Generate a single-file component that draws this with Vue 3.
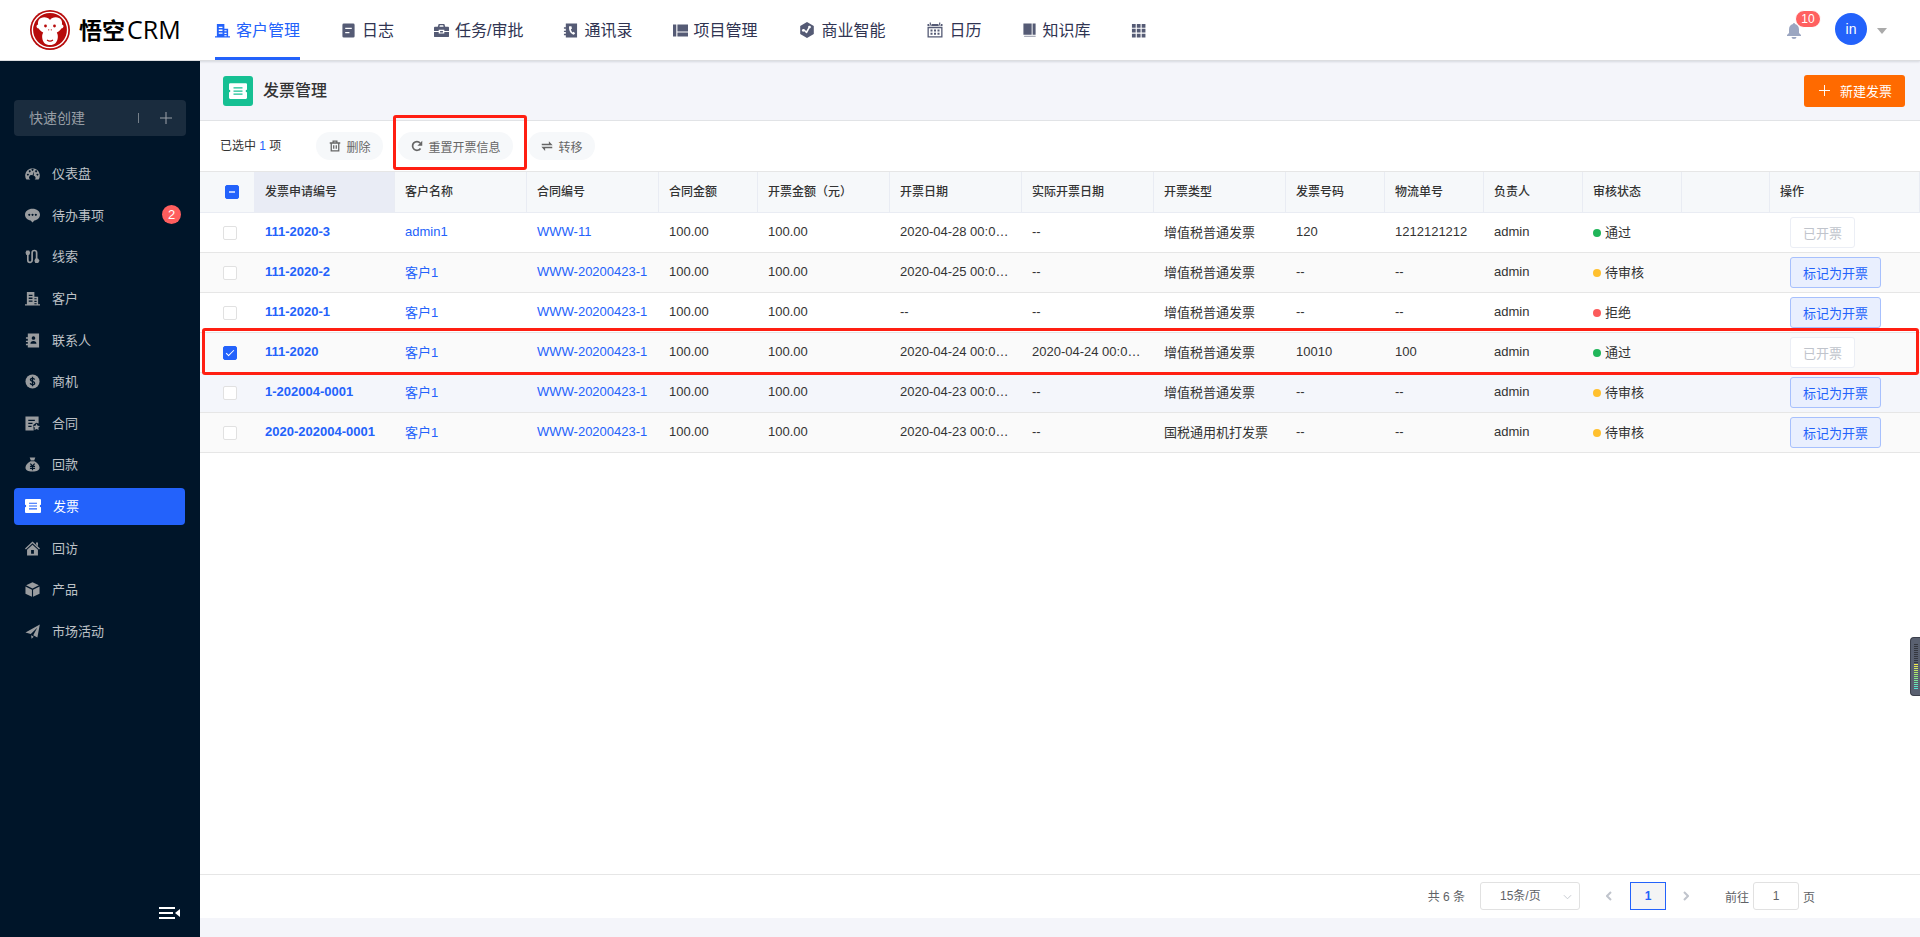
<script setup>
import { ref } from 'vue'

const icons = {
  customer: '<path fill-rule="evenodd" d="M2 1h8v5h4v8h2v1.400H0V14h2zM4 4v1.400h4V4zm0 3v1.400h4V7zm0 3v1.400h4V10zM10 7.600v1.200h2.400V7.600zm0 2.800v1.200h2.400v-1.200zm0 2.600v1h2.400v-1z"/>',
  log: '<path fill-rule="evenodd" d="M3 .5h10A1.500 1.500 0 0 1 14.500 2v12a1.500 1.500 0 0 1-1.500 1.500H3A1.500 1.500 0 0 1 1.500 14V2A1.500 1.500 0 0 1 3 .5zM4.500 5v1.500h7V5zm0 4.500V11H9V9.500z"/>',
  task: '<path fill-rule="evenodd" d="M5 1h6l1 3h3a1 1 0 0 1 1 1v3.500h-5V7.300H5v1.200H0V5a1 1 0 0 1 1-1h3zm1.200 1.400L5.800 4h4.400l-.4-1.600zM0 9.700h5v1.500h6V9.700h5V14a1 1 0 0 1-1 1H1a1 1 0 0 1-1-1zM6.500 8.600h3v1.400h-3z"/>',
  contacts: '<path fill-rule="evenodd" d="M3 .5h12v15H3V13H1v-1.500h2V9.700H1V8.200h2V6H1V4.500h2zm3.500 3C6 8 8 11.500 11.500 12.500l1.500-1.700-1.800-1.500-1.200.7C9 9 8.600 8 8.500 6.500L9.600 6 9 3.500z"/>',
  project: '<path d="M0 1.500h3.500v13H0zM4.700 1.500H16V9H4.700zM4.700 10.200H16v4.300H4.700z"/>',
  bi: '<path fill-rule="evenodd" d="M8 0l6.800 3.900v8.200L8 16l-6.800-3.900V3.900zM4.500 7a1.400 1.400 0 1 0 .8 2.300l1.900 2 .9-.2 2.400-4.600a1.400 1.400 0 1 0-1.300-.8L7.300 9 6 7.900A1.400 1.400 0 0 0 4.500 7z"/>',
  calendar: '<path fill-rule="evenodd" d="M.5 5h15v10.500H.5zm1.300 1.300v7.900h12.400V6.300zM.5 2h1.500v1.500h2.500V2h7v1.500H14V2h1.500v2.300H.5zM2.700.5h1.200V3H2.700zM12.100.5h1.200V3h-1.200zM3.500 7.500h2v2h-2zm3.500 0h2v2H7zm3.500 0h2v2h-2zm-7 3.300h2v2h-2zm3.500 0h2v2H7zm3.500 0h2v2h-2z"/>',
  book: '<path d="M1.500.5h8.800v12H1.500zM11.300.5h3.200v12h-3.200z"/><path opacity=".5" d="M2.500 13.500h12V15h-12a1 1 0 0 1 0-1.500z"/>',
  grid: '<path d="M1 1h4v4H1zM6.200 1h4v4h-4zM11.400 1h4v4h-4zM1 6.200h4v4H1zM6.200 6.200h4v4h-4zM11.400 6.200h4v4h-4zM1 11.400h4v4H1zM6.200 11.400h4v4h-4zM11.400 11.400h4v4h-4z"/>',
  bell: '<path d="M8 0a1 1 0 0 1 1 1c2.700.6 4 2.700 4 5.500V10l2 2v1H1v-1l2-2V6.500C3 3.700 4.300 1.600 7 1a1 1 0 0 1 1-1zM5.500 14h5a2.500 2 0 0 1-5 0z"/>',
  gauge: '<path fill-rule="evenodd" d="M1.500 14.500A7.800 7.800 0 1 1 14.500 14.500H10.200A2.300 2.300 0 0 0 9.200 10.300L9.800 5.500 8 9.900A2.300 2.300 0 0 0 5.800 14.500zM3 8.200a1 1 0 1 0 .1 0zM5 4.600a1 1 0 1 0 .1 0zM8 3a1 1 0 1 0 .1 0zM11.800 4.600a1 1 0 1 0 .1 0zM13.200 8.200a1 1 0 1 0 .1 0z"/>',
  chat: '<path fill-rule="evenodd" d="M8 .8c4.500 0 8 2.700 8 6.300 0 3.200-2.600 5.600-6 6.100L8 15.500l-2-2.300C2.600 12.700 0 10.300 0 7.100 0 3.500 3.500.8 8 .8zM4.500 6.200a1.100 1.100 0 1 0 .1 0zM8 6.200a1.100 1.100 0 1 0 .1 0zM11.500 6.200a1.100 1.100 0 1 0 .1 0z"/>',
  clue: '<path fill="none" stroke="currentColor" stroke-width="1.800" d="M3 5v7a2.300 2.300 0 0 0 4.600 0V4a2.300 2.300 0 0 1 4.800 0v7"/><path d="M1.500 1.500h3L5.500 4l-1 2.500h-3L.5 4zM11 10h3l1.500 2.500L14 15h-3l-1-2.500z"/>',
  person: '<path fill-rule="evenodd" d="M3 .5h12v15H3V13H1v-1.500h2V9.700H1V8.200h2V6H1V4.500h2zm6 3a1.900 1.900 0 1 0 .1 0zM5.800 11.500h6.400c0-2-1.200-3-3.200-3s-3.200 1-3.200 3z"/>',
  dollar: '<circle cx="8" cy="8" r="7.500"/><path fill="none" stroke="#001529" stroke-width="1.400" d="M10.300 6C10 4.900 9 4.600 8 4.600c-1.300 0-2.200.6-2.200 1.600 0 2.300 4.500 1.200 4.500 3.600 0 1-1 1.600-2.300 1.600-1.200 0-2.200-.5-2.400-1.600M8 3v10"/>',
  contract: '<path fill-rule="evenodd" d="M.5.5h14v7.500l-2.500-.7-3.200 2.200.5 6H.5zM3.500 4v1.300h7V4zm0 3.200v1.300H8V7.200zm0 3.300v1.300H7v-1.300z"/><path d="M12.300 8l1.200 2.300 2.500.4-1.800 1.800.4 2.500-2.300-1.100-2.200 1.100.4-2.500-1.800-1.800 2.500-.4z"/>',
  money: '<path d="M5 .5h6L9.800 3.800H6.200zM5.800 4.500h4.400C13 6 15.500 8.500 15.500 11.200c0 2.700-2.500 4.300-7.500 4.300S.5 13.900.5 11.200C.5 8.500 3 6 5.800 4.500z"/><path fill="none" stroke="#001529" stroke-width="1.300" d="M5.700 7L8 9.500 10.300 7M8 9.500V14M5.300 10h5.400M5.300 12.200h5.400"/>',
  invoice: '<path fill-rule="evenodd" d="M1 1h14a1 1 0 0 1 1 1v4.800a1.200 1.200 0 0 0 0 2.400V14a1 1 0 0 1-1 1H1a1 1 0 0 1-1-1V9.200a1.200 1.200 0 0 0 0-2.400V2a1 1 0 0 1 1-1zM4 4.700v1.100h8V4.700zm0 2.800v1.100h8V7.500zm0 2.800v1.100h8v-1.100z"/>',
  house: '<path d="M8 .5L16 8l-1 1-7-6.500L1 9 0 8zM11.800 1.500h2v4l-2-2z"/><path fill-rule="evenodd" d="M8 4l5.800 5.300V15.500H2.200V9.300zM6.500 9.500v4h3v-4z"/>',
  cube: '<path d="M8 .2l6.800 3.300L8 6.900 1.200 3.500zM.5 4.800l6.900 3.400v7.600L.5 12.400zM15.500 4.800L8.600 8.200v7.600l6.900-3.400z"/>',
  plane: '<path d="M15.800.5L13.200 14.500l-4.400-2.600L13 4 6.200 10.700.5 9zM6.500 12l2.800 1.700-2.300 2.100z"/>',
  trash: '<path fill="none" stroke="currentColor" stroke-width="1.700" d="M1 4h14M5.500 4V1.500h5V4M3 4v10.500h10V4M6.300 7v4.500M9.700 7v4.500"/>',
  refresh: '<path fill="none" stroke="currentColor" stroke-width="2.300" d="M12.700 11.200A5.800 5.800 0 1 1 12.200 4"/><path d="M15 1v6.500H8.500z"/>',
  transfer: '<path d="M1 5h9.500V1.500L15.500 6.900H1zM15 9.100H.5l5 5.400V11H15z"/>',
  plus: '<path fill="none" stroke="currentColor" stroke-width="1.400" d="M8 0v16M0 8h16"/>'
}

const nav = [
  { label: '客户管理', icon: 'customer', active: true },
  { label: '日志', icon: 'log' },
  { label: '任务/审批', icon: 'task' },
  { label: '通讯录', icon: 'contacts' },
  { label: '项目管理', icon: 'project' },
  { label: '商业智能', icon: 'bi' },
  { label: '日历', icon: 'calendar' },
  { label: '知识库', icon: 'book' }
]

const menu = [
  { label: '仪表盘', icon: 'gauge' },
  { label: '待办事项', icon: 'chat', badge: 2 },
  { label: '线索', icon: 'clue' },
  { label: '客户', icon: 'customer' },
  { label: '联系人', icon: 'person' },
  { label: '商机', icon: 'dollar' },
  { label: '合同', icon: 'contract' },
  { label: '回款', icon: 'money' },
  { label: '发票', icon: 'invoice', active: true },
  { label: '回访', icon: 'house' },
  { label: '产品', icon: 'cube' },
  { label: '市场活动', icon: 'plane' }
]

const columns = [
  { label: '发票申请编号', cls: 'c-no' },
  { label: '客户名称', cls: 'c-wide' },
  { label: '合同编号', cls: 'c-wide' },
  { label: '合同金额', cls: 'c-mid' },
  { label: '开票金额（元）', cls: 'c-wide' },
  { label: '开票日期', cls: 'c-wide' },
  { label: '实际开票日期', cls: 'c-wide' },
  { label: '开票类型', cls: 'c-wide' },
  { label: '发票号码', cls: 'c-mid' },
  { label: '物流单号', cls: 'c-mid' },
  { label: '负责人', cls: 'c-mid' },
  { label: '审核状态', cls: 'c-mid' }
]

const states = {
  pass: { label: '通过', cls: 'green' },
  wait: { label: '待审核', cls: 'yellow' },
  deny: { label: '拒绝', cls: 'red' }
}

const vat = '增值税普通发票'
const rows = ref([
  { no: '111-2020-3', customer: 'admin1', contract: 'WWW-11', date: '2020-04-28 00:00:00', real: '--', type: vat, code: '120', ship: '1212121212', state: 'pass', done: true, checked: false },
  { no: '111-2020-2', customer: '客户1', contract: 'WWW-20200423-1', date: '2020-04-25 00:00:00', real: '--', type: vat, code: '--', ship: '--', state: 'wait', done: false, checked: false },
  { no: '111-2020-1', customer: '客户1', contract: 'WWW-20200423-1', date: '--', real: '--', type: vat, code: '--', ship: '--', state: 'deny', done: false, checked: false },
  { no: '111-2020', customer: '客户1', contract: 'WWW-20200423-1', date: '2020-04-24 00:00:00', real: '2020-04-24 00:00:00', type: vat, code: '10010', ship: '100', state: 'pass', done: true, checked: true, marked: true },
  { no: '1-202004-0001', customer: '客户1', contract: 'WWW-20200423-1', date: '2020-04-23 00:00:00', real: '--', type: vat, code: '--', ship: '--', state: 'wait', done: false, checked: false, hover: true },
  { no: '2020-202004-0001', customer: '客户1', contract: 'WWW-20200423-1', date: '2020-04-23 00:00:00', real: '--', type: '国税通用机打发票', code: '--', ship: '--', state: 'wait', done: false, checked: false }
])
const page = ref('1')
</script>

<template>
  <div class="app">
    <header class="top">
      <a class="brand" href="#" aria-label="悟空CRM">
        <svg class="logo" viewBox="0 0 40 40" aria-hidden="true">
          <circle cx="20" cy="20" r="20" fill="#b70b0b" />
          <circle cx="20" cy="20" r="17.600" fill="none" stroke="#fff" stroke-width="1.400" />
          <path fill="#fff" d="M20 10c2-3.500 9-4 11.300 0 .8 1.500.9 3 .6 4.500 2 .2 2.400 3.500-.6 4-1 1.800-2.500 3-4.500 4 .8 1.500 1.200 3 1 5C27.400 32.500 24.500 35 20 35s-7.400-2.500-7.800-7.500c-.2-2 .2-3.500 1-5-2-1-3.500-2.200-4.500-4-3-.5-2.600-3.800-.6-4-.3-1.500-.2-3 .6-4.500C11 6 18 6.500 20 10z" />
          <path fill="none" stroke="#b70b0b" stroke-width="1.100" d="M17 30q3 2.200 6 0" />
          <g fill="#b70b0b"><circle cx="15.500" cy="16" r="1.400" /><circle cx="24.500" cy="16" r="1.400" /><circle cx="18.700" cy="19.800" r=".6" /><circle cx="21.300" cy="19.800" r=".6" /></g>
        </svg>
        <span class="brand-cn">悟空</span><span class="brand-en">CRM</span>
      </a>
      <nav class="nav">
        <a v-for="n in nav" :key="n.label" href="#" class="nav-item" :class="[n.icon, { active: n.active }]">
          <svg class="nav-icon" viewBox="0 0 16 16" aria-hidden="true" v-html="icons[n.icon]"></svg>
          <span>{{ n.label }}</span>
        </a>
        <a href="#" class="nav-item" aria-label="更多"><svg class="nav-icon" viewBox="0 0 16 16" v-html="icons.grid"></svg></a>
      </nav>
      <div class="user">
        <button class="bell" aria-label="通知">
          <svg viewBox="0 0 16 16" v-html="icons.bell"></svg>
          <span class="bell-badge">10</span>
        </button>
        <button class="account"><span class="avatar">in</span><i class="caret"></i></button>
      </div>
    </header>

    <div class="body">
      <aside class="side">
        <button class="quick"><span>快速创建</span><i class="bar"></i><svg viewBox="0 0 16 16" v-html="icons.plus"></svg></button>
        <nav class="menu">
          <a v-for="m in menu" :key="m.label" href="#" class="menu-item" :class="{ active: m.active }">
            <svg viewBox="0 0 16 16" aria-hidden="true" v-html="icons[m.icon]"></svg>
            <span>{{ m.label }}</span>
            <em v-if="m.badge">{{ m.badge }}</em>
          </a>
        </nav>
        <button class="fold" aria-label="收起菜单">
          <svg viewBox="0 0 22 12"><path fill="#fff" d="M0 0h16v2H0zM0 5h14v2H0zM0 10h16v2H0zM21 2v8l-5-4z" /></svg>
        </button>
      </aside>

      <main class="main">
        <div class="title-bar">
          <span class="title-icon"><svg viewBox="0 0 16 16" v-html="icons.invoice"></svg></span>
          <h1>发票管理</h1>
          <button class="create"><svg viewBox="0 0 16 16" v-html="icons.plus"></svg>新建发票</button>
        </div>

        <section class="panel">
          <div class="tools">
            <span class="picked">已选中 <b>1</b> 项</span>
            <button class="pill"><svg viewBox="0 0 16 16" v-html="icons.trash"></svg>删除</button>
            <div class="pill-wrap">
              <button class="pill"><svg viewBox="0 0 16 16" v-html="icons.refresh"></svg>重置开票信息</button>
              <i class="frame tool-frame"></i>
            </div>
            <button class="pill"><svg viewBox="0 0 16 16" v-html="icons.transfer"></svg>转移</button>
          </div>

          <table class="grid">
            <colgroup>
              <col class="c-check" />
              <col v-for="c in columns" :key="c.label" :class="c.cls" />
              <col />
              <col class="c-act" />
            </colgroup>
            <thead>
              <tr>
                <th class="check"><input type="checkbox" aria-label="全选" :indeterminate="true" /></th>
                <th v-for="(c, i) in columns" :key="c.label" :class="{ sorted: i === 0 }">{{ c.label }}</th>
                <th></th>
                <th>操作</th>
              </tr>
            </thead>
            <tbody>
              <tr v-for="r in rows" :key="r.no" :class="{ hover: r.hover, marked: r.marked }">
                <td class="check">
                  <input v-model="r.checked" type="checkbox" :aria-label="r.no" />
                  <i v-if="r.marked" class="frame row-frame"></i>
                </td>
                <td><a href="#" class="strong">{{ r.no }}</a></td>
                <td><a href="#">{{ r.customer }}</a></td>
                <td><a href="#">{{ r.contract }}</a></td>
                <td>100.00</td>
                <td>100.00</td>
                <td>{{ r.date }}</td>
                <td>{{ r.real }}</td>
                <td>{{ r.type }}</td>
                <td>{{ r.code }}</td>
                <td>{{ r.ship }}</td>
                <td>admin</td>
                <td><i class="dot" :class="states[r.state].cls"></i>{{ states[r.state].label }}</td>
                <td></td>
                <td class="act"><button :disabled="r.done">{{ r.done ? '已开票' : '标记为开票' }}</button></td>
              </tr>
            </tbody>
          </table>

          <footer class="pager">
            <span class="total">共 6 条</span>
            <span class="size">
              <select aria-label="每页条数"><option>15条/页</option></select>
              <svg viewBox="0 0 10 6"><path d="M1 1l4 4 4-4" /></svg>
            </span>
            <button class="arrow" aria-label="上一页"><svg viewBox="0 0 6 10"><path d="M5 1L1 5l4 4" /></svg></button>
            <button class="current">1</button>
            <button class="arrow" aria-label="下一页"><svg viewBox="0 0 6 10"><path d="M1 1l4 4-4 4" /></svg></button>
            <label class="jump">前往<input v-model="page" type="text" />页</label>
          </footer>
        </section>
      </main>
    </div>

    <div class="meter" aria-hidden="true"><i class="off"></i><i class="on"></i></div>
  </div>
</template>

<style>
body {
  margin: 0;
}
</style>

<style scoped>
.app {
  display: flex;
  flex-direction: column;
  min-height: 100vh;
  font-family: "Liberation Sans", "Noto Sans CJK SC", sans-serif;
  font-size: 13px;
  color: #333;
  background: #f4f5fa;
}
.app * {
  box-sizing: border-box;
}
a {
  color: #2362fb;
  text-decoration: none;
}
button {
  margin: 0;
  padding: 0;
  border: 0;
  background: none;
  font: inherit;
  color: inherit;
  cursor: pointer;
}
svg {
  display: block;
  flex: none;
  fill: currentColor;
}

/* top bar */
.top {
  position: relative;
  z-index: 2;
  display: flex;
  align-items: stretch;
  height: 61px;
  background: #fff;
  border-bottom: 1px solid #dcdde0;
  box-shadow: 0 1px 2px rgba(0, 21, 41, 0.12);
}
.brand {
  display: flex;
  align-items: center;
  width: 215px;
  padding-left: 30px;
  color: #000;
}
.logo {
  width: 40px;
  height: 40px;
  margin-right: 9px;
}
.brand-cn {
  padding-bottom: 3px;
  font-size: 23px;
  font-weight: 700;
}
.brand-en {
  margin-left: 2px;
  padding-bottom: 2px;
  font-family: "Open Sans", sans-serif;
  font-size: 25px;
  font-weight: 500;
}
.nav {
  display: flex;
  gap: 40px;
}
.nav-item {
  display: flex;
  align-items: center;
  gap: 6px;
  font-size: 16px;
  color: #303452;
  border-bottom: 3px solid transparent;
  border-top: 3px solid transparent;
}
.nav-item.active {
  color: #2362fb;
  border-bottom-color: #2362fb;
}
.nav-item span {
  padding-bottom: 2px;
}
.nav-icon {
  width: 15px;
  height: 15px;
  color: #555b75;
}
.active .nav-icon {
  color: #2362fb;
}
.log {
  margin-left: 1px;
}
.bi .nav-icon,
.calendar .nav-icon {
  width: 18px;
  height: 16px;
}
.user {
  display: flex;
  align-items: center;
  margin: 0 33px 0 auto;
  padding-bottom: 2px;
}
.bell {
  position: relative;
  width: 16px;
  margin: 4px 33px 0 0;
  color: #9ba6c1;
}
.bell svg {
  width: 16px;
  height: 18px;
}
.bell-badge {
  position: absolute;
  left: 9px;
  top: -12px;
  width: 26px;
  border: 1px solid #fff;
  border-radius: 9px;
  background: #ff6060;
  color: #fff;
  font-size: 12px;
  line-height: 16px;
}
.account {
  display: flex;
  align-items: center;
  gap: 10px;
}
.avatar {
  width: 32px;
  border-radius: 50%;
  background: #2362fb;
  color: #fff;
  font-size: 14px;
  line-height: 32px;
}
.caret {
  margin-top: 3px;
  border: 5px solid transparent;
  border-top: 6px solid #aaa;
  border-bottom: 0;
}

/* side menu */
.body {
  display: flex;
  flex: 1;
}
.side {
  display: flex;
  flex-direction: column;
  width: 200px;
  flex: none;
  padding: 39px 14px 18px;
  background: #001529;
  color: #bdc1c6;
}
.quick {
  display: flex;
  align-items: center;
  height: 36px;
  padding: 0 14px 0 15px;
  border-radius: 4px;
  background: #1a2c3e;
  color: #999fa6;
  font-size: 14px;
}
.quick span {
  padding-bottom: 2px;
}
.quick .bar {
  width: 1px;
  height: 10px;
  margin: 0 21px 0 auto;
  background: #76808a;
}
.quick svg {
  width: 12px;
  height: 12px;
}
.menu {
  display: grid;
  grid-auto-rows: 1fr;
  align-items: center;
  height: 499px;
  margin-top: 17px;
}
.menu-item {
  display: flex;
  align-items: center;
  height: 37px;
  padding: 0 5px 0 11px;
  border-radius: 4px;
  color: inherit;
}
.menu-item span {
  padding-bottom: 2px;
}
.menu-item svg {
  width: 15px;
  height: 15px;
  margin-right: 12px;
  color: #999c9f;
}
.menu-item.active {
  margin-right: 1px;
  background: #2362fb;
  color: #fff;
}
.menu-item.active svg {
  width: 16px;
  height: 16px;
  color: #fff;
}
.menu-item em {
  width: 19px;
  margin: 0 0 2px auto;
  border-radius: 50%;
  background: #ff5e5e;
  color: #fff;
  font-style: normal;
  line-height: 19px;
  text-align: center;
}
.fold {
  margin: auto 5px 0 auto;
}
.fold svg {
  width: 22px;
  height: 12px;
}

/* content */
.main {
  display: flex;
  flex: 1;
  flex-direction: column;
  min-width: 0;
  padding-bottom: 19px;
}
.title-bar {
  display: flex;
  align-items: center;
  height: 59px;
  padding: 0 15px 0 23px;
}
.title-icon {
  padding: 6px;
  border-radius: 3px;
  background: #16c093;
  color: #fff;
}
.title-icon svg {
  width: 18px;
  height: 18px;
}
h1 {
  margin: 0 auto 0 10px;
  padding-bottom: 4px;
  font-size: 16px;
  font-weight: 500;
}
.create {
  display: flex;
  align-items: center;
  gap: 10px;
  height: 32px;
  padding: 0 13px 0 15px;
  border-radius: 3px;
  background: #ff6a00;
  color: #fff;
}
.create svg {
  width: 11px;
  height: 11px;
}
.panel {
  display: flex;
  flex: 1;
  flex-direction: column;
  border-top: 1px solid #e1e3e6;
  background: #fff;
}
.tools {
  display: flex;
  align-items: center;
  gap: 15px;
  height: 51px;
  padding-left: 20px;
  border-bottom: 1px solid #e6e6e6;
  font-size: 12px;
}
.picked {
  margin-right: 20px;
  padding-bottom: 3px;
}
.picked b {
  font-weight: 400;
  color: #2362fb;
}
.pill-wrap {
  position: relative;
}
.pill {
  display: flex;
  align-items: center;
  gap: 5px;
  height: 28px;
  padding: 0 13px;
  border-radius: 14px;
  background: #f6f8fa;
  color: #666;
}
.pill svg {
  width: 12px;
  height: 12px;
}
.frame {
  position: absolute;
  border: 3px solid #ff1f12;
  border-radius: 3px;
  pointer-events: none;
}
.tool-frame {
  inset: -17px -14px -10px -5px;
}
.row-frame {
  inset: -5px 1px -2px 2px;
}

/* table */
.grid {
  width: 100%;
  table-layout: fixed;
  border-collapse: separate;
  border-spacing: 0;
}
.c-check {
  width: 54px;
}
.c-no {
  width: 141px;
}
.c-wide {
  width: 132px;
}
.c-mid {
  width: 99px;
}
.c-act {
  width: 150px;
}
th,
td {
  height: 40px;
  padding: 0 10px 2px;
  overflow: hidden;
  text-align: left;
  text-overflow: ellipsis;
  white-space: nowrap;
  border-bottom: 1px solid #e6e6e6;
}
th {
  height: 41px;
  padding-bottom: 4px;
  border-right: 1px solid #e9ecf3;
  border-bottom-color: #e9ecf3;
  background: #f6f8fa;
  font-size: 12px;
  font-weight: 500;
}
th.check {
  padding: 0 0 0 25px;
  border-right: 0;
}
th.sorted {
  background: #e9ecf5;
}
th:nth-child(2),
td:nth-child(2) {
  padding-left: 11px;
}
td.check {
  padding: 0 0 0 23px;
  overflow: visible;
}
tbody tr {
  position: relative;
}
tbody tr:nth-child(even) {
  background: #fafafa;
}
tbody tr.hover {
  background: #f4f6fb;
}
tbody tr.marked {
  z-index: 1;
}
.strong {
  font-weight: 700;
}
.grid input {
  appearance: none;
  display: block;
  width: 14px;
  height: 14px;
  margin: 0;
  border: 1px solid #e1e1e1;
  border-radius: 2px;
  background: #fff;
}
.grid input:checked,
.grid input:indeterminate {
  border-color: #2362fb;
  background: #2362fb;
}
.grid input:checked::after {
  content: "";
  display: block;
  width: 3px;
  height: 7px;
  margin: 1px 0 0 4px;
  border: solid #fff;
  border-width: 0 1px 1px 0;
  transform: rotate(45deg);
}
.grid input:indeterminate::after {
  content: "";
  display: block;
  width: 6px;
  height: 2px;
  margin: 5px 3px;
  background: #b5caff;
}
.dot {
  display: inline-block;
  width: 8px;
  height: 8px;
  margin-right: 4px;
  border-radius: 50%;
}
.green {
  background: #20b559;
}
.yellow {
  background: #ffc02e;
}
.red {
  background: #fb5b5b;
}
td.act {
  padding: 0 0 0 20px;
}
.act button {
  display: block;
  height: 31px;
  padding: 0 12px;
  border: 1px solid #a7c0fd;
  border-radius: 3px;
  background: #e9effe;
  color: #2362fb;
}
.act button:disabled {
  border-color: #ebeef5;
  background: #fff;
  color: #c0c4cc;
}

/* pager */
.pager {
  display: flex;
  align-items: center;
  justify-content: flex-end;
  height: 44px;
  margin-top: auto;
  padding: 0 105px 1px 0;
  border-top: 1px solid #e6e6e6;
  color: #606266;
  font-size: 12px;
}
.total {
  padding-bottom: 2px;
}
.size {
  position: relative;
  margin: 0 26px 0 15px;
}
.size select {
  appearance: none;
  display: block;
  width: 100px;
  height: 28px;
  padding: 0 19px;
  border: 1px solid #e1e1e1;
  border-radius: 3px;
  background: #fff;
  color: inherit;
  font: inherit;
}
.size svg {
  position: absolute;
  right: 8px;
  top: 12px;
  width: 9px;
  height: 6px;
}
.pager path {
  fill: none;
  stroke: #c0c4cc;
  stroke-width: 1;
}
.arrow svg {
  width: 6px;
  height: 10px;
}
.pager .arrow path {
  stroke-width: 2;
}
.current {
  width: 36px;
  height: 28px;
  margin: 0 17px 0 18px;
  border: 1px solid #2362fb;
  background: #f4f4f5;
  color: #2362fb;
  font-weight: 700;
}
.jump {
  display: flex;
  align-items: center;
  gap: 4px;
  margin-left: 36px;
}
.jump input {
  width: 46px;
  height: 28px;
  padding: 0;
  border: 1px solid #e1e1e1;
  border-radius: 3px;
  color: inherit;
  font: inherit;
  text-align: center;
}

/* level meter docked at the window edge */
.meter {
  position: fixed;
  right: 0;
  top: 68%;
  z-index: 3;
  width: 10px;
  padding: 6px 2px 6px 3px;
  border: 1px solid #3b3f4b;
  border-right: 0;
  border-radius: 4px 0 0 4px;
  background: #596070;
}
.meter i {
  display: block;
}
.off {
  height: 20px;
  background: repeating-linear-gradient(#34373f 0 1px, transparent 1px 2px);
}
.on {
  height: 25px;
  background: repeating-linear-gradient(transparent 0 1px, #596070 1px 2px), linear-gradient(#f5e94a, #8fe87a 50%, #4fe3d6);
}
</style>
